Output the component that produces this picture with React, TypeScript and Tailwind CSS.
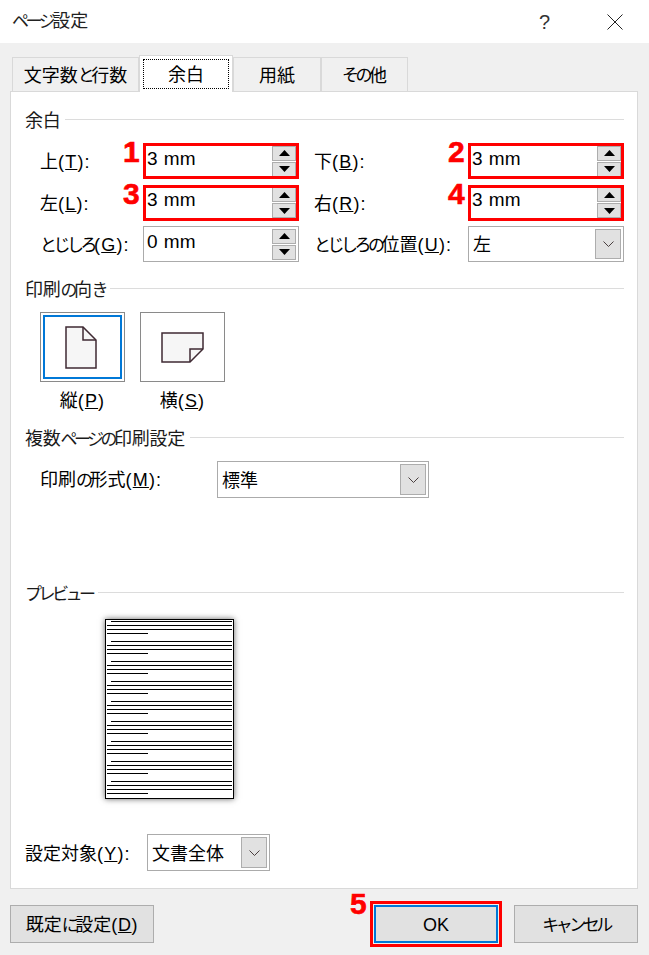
import type { ReactNode } from "react";

const jp = "[font-family:'Liberation_Sans','Noto_Sans_CJK_JP',sans-serif]";

function K({ children }: { children: ReactNode }) {
  return <span className="text-[17px] tracking-[-3.5px]">{children}</span>;
}

function Legend({ children }: { children: ReactNode }) {
  return (
    <div className="flex h-[24px] items-center gap-[5px] pr-[13px] pl-[14px] text-[#1a1a1a]">
      <span className="pt-[4px] tracking-[-0.3px]">{children}</span>
      <div className="h-px flex-1 bg-[#dcdcdc]" />
    </div>
  );
}

function Chevron() {
  return (
    <div className="flex h-full w-[26px] items-center justify-center border border-[#adadad] bg-[#e1e1e1]">
      <svg width="11" height="6" viewBox="0 0 11 6" fill="none">
        <path d="M0.5 0.5 L5.5 5.5 L10.5 0.5" stroke="#4a3f3f" strokeWidth="1" />
      </svg>
    </div>
  );
}

function Spin({ value, mark, num }: { value: string; mark?: boolean; num?: string }) {
  return (
    <div className="relative flex h-[36px] w-[156px] items-center justify-between border border-[#ababab] bg-white pr-[2px] pl-[3px]">
      <span className="mb-[5px] text-[19px] tracking-[0.4px]">{value}</span>
      <div className="flex flex-col gap-px">
        <div className="flex h-[15px] w-[24px] items-center justify-center border border-[#adadad] bg-[#e1e1e1]">
          <svg width="11" height="6" viewBox="0 0 11 6"><path d="M5.5 0 L11 6 L0 6 Z" fill="#000" /></svg>
        </div>
        <div className="flex h-[15px] w-[24px] items-center justify-center border border-[#adadad] bg-[#e1e1e1]">
          <svg width="11" height="6" viewBox="0 0 11 6"><path d="M0 0 L11 0 L5.5 6 Z" fill="#000" /></svg>
        </div>
      </div>
      {mark && <div className="pointer-events-none absolute -inset-[1px] border-[3px] border-[#ff0000]" />}
      {num && <Badge n={num} cls="absolute -left-[21px] -top-[8px]" />}
    </div>
  );
}

function Badge({ n, cls }: { n: string; cls: string }) {
  return (
    <span className={`${cls} text-[30px] leading-[32px] font-bold text-[#ff0000] [-webkit-text-stroke:0.6px_#ff0000] [text-shadow:0_0_2px_#fff]`}>
      {n}
    </span>
  );
}

function Select({ value, w, h = "h-[37px]" }: { value: string; w: string; h?: string }) {
  return (
    <div className={`flex ${w} ${h} items-center justify-between border border-[#ababab] bg-white p-[2px] pl-[4px]`}>
      <span className="pt-[2px]">{value}</span>
      <Chevron />
    </div>
  );
}

function Label({ pre, k, w }: { pre: ReactNode; k: string; w: string }) {
  return (
    <div className={`${w} shrink-0 pt-[2px]`}>
      {pre}
      <span className="tracking-[1.2px]">(<u>{k}</u>):</span>
    </div>
  );
}

function Row({ children }: { children: ReactNode }) {
  return <div className="flex h-[36px] items-center pl-[29px]">{children}</div>;
}

function TabBtn({ children, w }: { children: ReactNode; w: string }) {
  return (
    <div className={`flex h-[34px] ${w} items-center justify-center border border-b-0 border-[#d9d9d9] bg-[#f0f0f0] pt-[2px]`}>
      {children}
    </div>
  );
}

function Btn({ children, cls }: { children: ReactNode; cls: string }) {
  return <div className={`flex h-[38px] items-center justify-center pt-[2px] ${cls}`}>{children}</div>;
}

function PreviewPage() {
  const groups = Array.from({ length: 9 }, (_, i) => i);
  return (
    <div className="ml-[94px] mt-[15px] h-[180px] w-[129px] shadow-[0_0_6px_rgba(0,0,0,0.6)]">
      <svg width="129" height="180" viewBox="0 0 129 180" className="block">
        <rect x="0.5" y="0.5" width="128" height="179" fill="#fff" stroke="#000" />
        {groups.map((i) => {
          const y = i * 20;
          return (
            <g key={i} stroke="#000" strokeWidth="1">
              <line x1="6" x2="127" y1={y + 2.5} y2={y + 2.5} />
              <line x1="2" x2="127" y1={y + 6.5} y2={y + 6.5} />
              <line x1="2" x2="127" y1={y + 10.5} y2={y + 10.5} />
              <line x1="2" x2="43" y1={y + 14.5} y2={y + 14.5} />
            </g>
          );
        })}
      </svg>
    </div>
  );
}

export default function App() {
  return (
    <div className={`relative h-[955px] w-[649px] overflow-hidden bg-[#f0f0f0] text-[18px] leading-[24px] text-black ${jp}`}>
      <div className="flex h-[43px] items-center justify-between bg-white pr-[26px] pl-[12px]">
        <span className="text-[#222]"><K>ページ</K>設定</span>
        <div className="flex items-center gap-[57px]">
          <span className="text-[20px] text-[#333]">?</span>
          <svg width="16" height="16" viewBox="0 0 16 16" fill="none">
            <path d="M0.5 0.5 L15.5 15.5 M15.5 0.5 L0.5 15.5" stroke="#222" strokeWidth="1" />
          </svg>
        </div>
      </div>

      <div className="mt-[12px] flex h-[36px] items-end pl-[12px]">
        <TabBtn w="w-[127px]">文字数<K>と</K>行数</TabBtn>
        <div className="relative z-10 -mb-px flex h-[37px] w-[94px] items-center justify-center border border-b-0 border-[#d9d9d9] bg-white p-[3px]">
          <div className="flex h-full w-full items-center justify-center border border-dotted border-black pt-[2px]">余白</div>
        </div>
        <TabBtn w="w-[88px]">用紙</TabBtn>
        <TabBtn w="w-[87px]"><K>その</K>他</TabBtn>
      </div>

      <div className="mx-[10px] h-[798px] w-[628px] border border-[#d9d9d9] bg-white pt-[15px]">
        <Legend>余白</Legend>
        <div className="mt-[12px] flex flex-col gap-[5.5px]">
          <Row>
            <Label pre="上" k="T" w="w-[103px]" />
            <Spin value="3 mm" mark num="1" />
            <Label pre="下" k="B" w="ml-[15px] w-[154px]" />
            <Spin value="3 mm" mark num="2" />
          </Row>
          <Row>
            <Label pre="左" k="L" w="w-[103px]" />
            <Spin value="3 mm" mark num="3" />
            <Label pre="右" k="R" w="ml-[15px] w-[154px]" />
            <Spin value="3 mm" mark num="4" />
          </Row>
          <Row>
            <Label pre={<K>とじしろ</K>} k="G" w="w-[103px]" />
            <Spin value="0 mm" />
            <Label pre={<><K>とじしろの</K>位置</>} k="U" w="ml-[15px] w-[154px]" />
            <Select value="左" w="w-[156px]" h="h-[36px]" />
          </Row>
        </div>

        <div className="mt-[14px]">
          <Legend>印刷<K>の</K>向<K>き</K></Legend>
        </div>
        <div className="mt-[12px] flex gap-[15px] pl-[29px]">
          <div className="flex w-[85px] flex-col items-center gap-[5px]">
            <div className="h-[70px] w-[85px] border border-[#8a8a8a] p-[2px]">
              <div className="flex h-full w-full items-center justify-center border-2 border-[#0078d7] pr-[3px]">
                <svg width="32" height="43" viewBox="0 0 32 43" fill="none">
                  <path d="M1 1 H18 L31 14 V42 H1 Z" fill="#f6f6f6" stroke="#3f2a33" strokeWidth="1.5" />
                  <path d="M18 1 V14 H31" stroke="#3f2a33" strokeWidth="1.5" />
                </svg>
              </div>
            </div>
            <div className="pt-[2px]">縦<span className="tracking-[1.2px]">(<u>P</u>)</span></div>
          </div>
          <div className="flex w-[85px] flex-col items-center gap-[5px]">
            <div className="flex h-[70px] w-[85px] items-center justify-center border border-[#8a8a8a]">
              <svg width="43" height="31" viewBox="0 0 43 31" fill="none">
                <path d="M1 1 H42 V17 L29 30 H1 Z" fill="#f6f6f6" stroke="#3f2a33" strokeWidth="1.5" />
                <path d="M42 17 H29 V30" stroke="#3f2a33" strokeWidth="1.5" />
              </svg>
            </div>
            <div className="pt-[2px]">横<span className="tracking-[1.2px]">(<u>S</u>)</span></div>
          </div>
        </div>

        <div className="mt-[12px]">
          <Legend>複数<K>ページの</K>印刷設定</Legend>
        </div>
        <div className="mt-[12px] flex h-[37px] items-center pl-[29px]">
          <Label pre={<>印刷<K>の</K>形式</>} k="M" w="w-[177px]" />
          <Select value="標準" w="w-[212px]" />
        </div>

        <div className="mt-[82px]">
          <Legend><K>プレビュー</K></Legend>
        </div>
        <PreviewPage />

        <div className="mt-[35px] flex h-[37px] items-center pl-[14px]">
          <Label pre="設定対象" k="Y" w="w-[122px]" />
          <Select value="文書全体" w="w-[123px]" />
        </div>
      </div>

      <div className="mt-[16px] flex items-center pr-[11px] pl-[10px]">
        <Btn cls="w-[144px] border border-[#adadad] bg-[#e1e1e1]">
          <span>既定<K>に</K>設定<span className="tracking-[0.6px]">(<u>D</u>)</span></span>
        </Btn>
        <div className="relative ml-auto">
          <Btn cls="w-[124px] border-2 border-[#0078d7] bg-[#e1e1e1]">
            <span>OK</span>
          </Btn>
          <div className="pointer-events-none absolute -inset-[4px] border-[3px] border-[#ff0000]" />
          <Badge n="5" cls="absolute -left-[24px] -top-[17px]" />
        </div>
        <Btn cls="ml-[16px] w-[124px] border border-[#adadad] bg-[#e1e1e1]">
          <span><K>キャンセル</K></span>
        </Btn>
      </div>
    </div>
  );
}
